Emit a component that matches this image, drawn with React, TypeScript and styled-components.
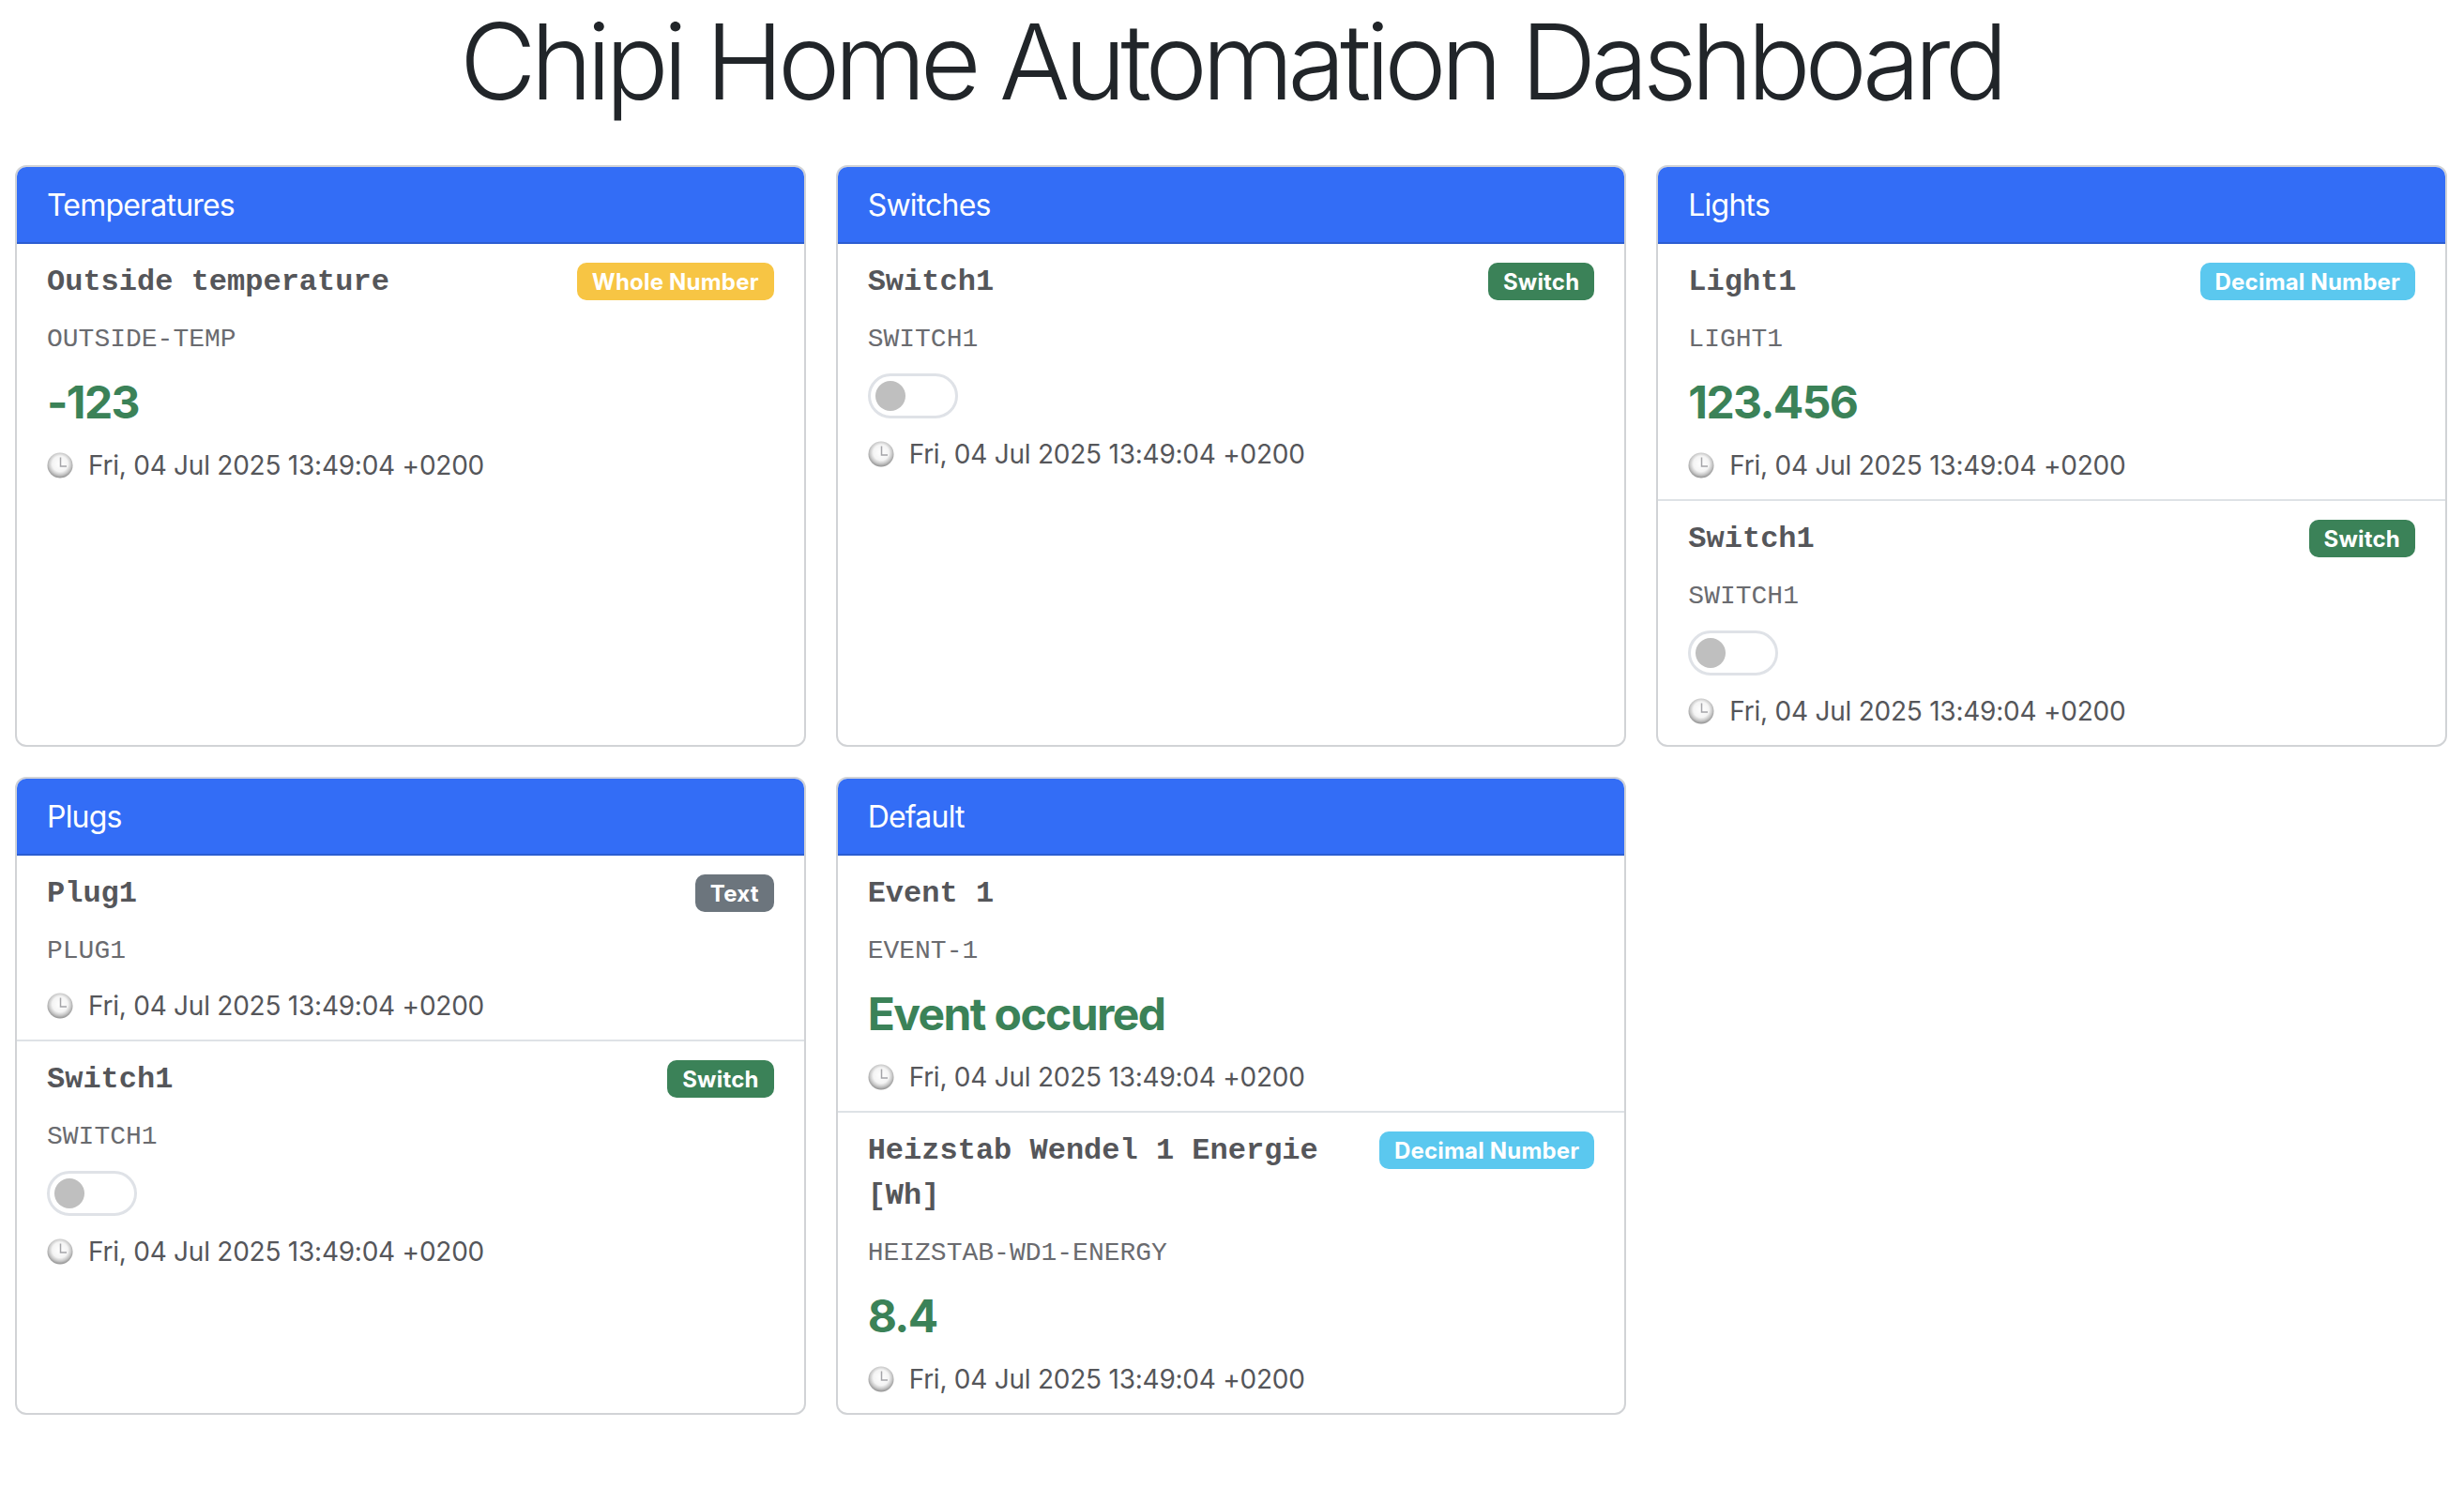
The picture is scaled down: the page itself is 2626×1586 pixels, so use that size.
import styled, { createGlobalStyle } from 'styled-components';

type BadgeKind = 'Whole Number' | 'Decimal Number' | 'Switch' | 'Text';

interface Item {
  name: string;
  code: string;
  kind?: BadgeKind;
  value?: string;
  isSwitch?: boolean;
}

interface Group {
  title: string;
  items: Item[];
}

const GROUPS: Group[] = [
  {
    title: 'Temperatures',
    items: [
      { name: 'Outside temperature', code: 'OUTSIDE-TEMP', kind: 'Whole Number', value: '-123' },
    ],
  },
  {
    title: 'Switches',
    items: [{ name: 'Switch1', code: 'SWITCH1', kind: 'Switch', isSwitch: true }],
  },
  {
    title: 'Lights',
    items: [
      { name: 'Light1', code: 'LIGHT1', kind: 'Decimal Number', value: '123.456' },
      { name: 'Switch1', code: 'SWITCH1', kind: 'Switch', isSwitch: true },
    ],
  },
  {
    title: 'Plugs',
    items: [
      { name: 'Plug1', code: 'PLUG1', kind: 'Text' },
      { name: 'Switch1', code: 'SWITCH1', kind: 'Switch', isSwitch: true },
    ],
  },
  {
    title: 'Default',
    items: [
      { name: 'Event 1', code: 'EVENT-1', value: 'Event occured' },
      {
        name: 'Heizstab Wendel 1 Energie [Wh]',
        code: 'HEIZSTAB-WD1-ENERGY',
        kind: 'Decimal Number',
        value: '8.4',
      },
    ],
  },
];

const BADGE_COLORS: Record<BadgeKind, string> = {
  'Whole Number': '#f7c544',
  'Decimal Number': '#5bc8ef',
  Switch: '#3b8258',
  Text: '#6c757d',
};

const ClockIcon: React.FC = () => (
  <svg width="28" height="28" viewBox="0 0 28 28">
    <defs>
      <radialGradient id="clockFace" cx="50%" cy="44%" r="56%">
        <stop offset="0%" stopColor="#ffffff" />
        <stop offset="55%" stopColor="#f4f4f4" />
        <stop offset="78%" stopColor="#c8c8c8" />
        <stop offset="100%" stopColor="#8f8f8f" />
      </radialGradient>
    </defs>
    <circle cx="14" cy="14" r="13.5" fill="url(#clockFace)" />
    <path d="M14.5 5.5V15H21" fill="none" stroke="#a4a4a8" strokeWidth="1.5" />
  </svg>
);

const App: React.FC = () => (
  <Page>
    <GlobalStyle />
    <Title>Chipi Home Automation Dashboard</Title>
    <CardGrid>
      {GROUPS.map((group) => (
        <Card key={group.title}>
          <CardHeader>{group.title}</CardHeader>
          <ItemList>
            {group.items.map((item) => (
              <ItemRow key={item.code}>
                <ItemHead>
                  <ItemName>{item.name}</ItemName>
                  {item.kind && <Badge $color={BADGE_COLORS[item.kind]}>{item.kind}</Badge>}
                </ItemHead>
                <ItemCode>{item.code}</ItemCode>
                {item.value && <ItemValue>{item.value}</ItemValue>}
                {item.isSwitch && (
                  <Toggle>
                    <ToggleKnob />
                  </Toggle>
                )}
                <Timestamp>
                  <ClockIcon />
                  Fri, 04 Jul 2025 13:49:04 +0200
                </Timestamp>
              </ItemRow>
            ))}
          </ItemList>
        </Card>
      ))}
    </CardGrid>
  </Page>
);

const GlobalStyle = createGlobalStyle`
  *, *::before, *::after {
    box-sizing: border-box;
  }

  body {
    margin: 0;
    background: #fff;
    font-family: Inter, "Liberation Sans", sans-serif;
    color: #212529;
  }
`;

const Page = styled.div`
  padding: 0 18px 0 16px;
`;

const Title = styled.h1`
  margin: 0 0 46px;
  text-align: center;
  font-size: 112px;
  line-height: 130px;
  font-weight: 300;
  color: #212529;
  letter-spacing: -6.1px;
`;

const CardGrid = styled.div`
  display: grid;
  grid-template-columns: repeat(3, 1fr);
  gap: 32px;
`;

const Card = styled.section`
  display: flex;
  flex-direction: column;
  border: 2px solid #d1d3d6;
  border-radius: 12px;
  overflow: hidden;
`;

const CardHeader = styled.div`
  height: 82px;
  padding: 0 32px;
  display: flex;
  align-items: center;
  background: #336df6;
  border-bottom: 2px solid #2b5dd1;
  color: #fff;
  font-size: 32px;
  letter-spacing: -0.8px;
`;

const ItemList = styled.div`
  display: flex;
  flex-direction: column;
`;

const ItemRow = styled.div`
  padding: 17px 32px 15px;
  display: flex;
  flex-direction: column;
  border-top: 2px solid #dee2e6;

  &:first-child {
    border-top: 0;
  }
`;

const ItemHead = styled.div`
  display: flex;
  justify-content: space-between;
  align-items: flex-start;
  gap: 64px;
`;

const ItemName = styled.div`
  font-family: "Liberation Mono", monospace;
  font-weight: 700;
  font-size: 32px;
  line-height: 48px;
  color: #55565a;
`;

const Badge = styled.span<{ $color: string }>`
  flex: none;
  margin-top: 3px;
  padding: 0 16px;
  height: 40px;
  line-height: 41px;
  border-radius: 10px;
  background: ${(p) => p.$color};
  color: #fff;
  font-size: 24px;
  font-weight: 700;
  letter-spacing: 0.2px;
  white-space: nowrap;
`;

const ItemCode = styled.div`
  margin-top: 16px;
  font-family: "Liberation Mono", monospace;
  font-size: 28px;
  line-height: 42px;
  color: #6a6b6f;
`;

const ItemValue = styled.div`
  margin: 14px 0 -2px;
  font-size: 48px;
  line-height: 64px;
  font-weight: 700;
  letter-spacing: -1.6px;
  color: #3b8258;
`;

const Toggle = styled.div`
  margin-top: 15px;
  margin-bottom: 1px;
  width: 96px;
  height: 48px;
  padding: 0 5px;
  display: flex;
  align-items: center;
  border: 3px solid #dfe2e7;
  border-radius: 24px;
`;

const ToggleKnob = styled.div`
  width: 32px;
  height: 32px;
  border-radius: 50%;
  background: #bfbfbf;
`;

const Timestamp = styled.div`
  margin-top: 16px;
  display: flex;
  align-items: center;
  gap: 16px;
  font-size: 28px;
  line-height: 42px;
  letter-spacing: -0.24px;
  color: #55565a;
`;

export default App;
